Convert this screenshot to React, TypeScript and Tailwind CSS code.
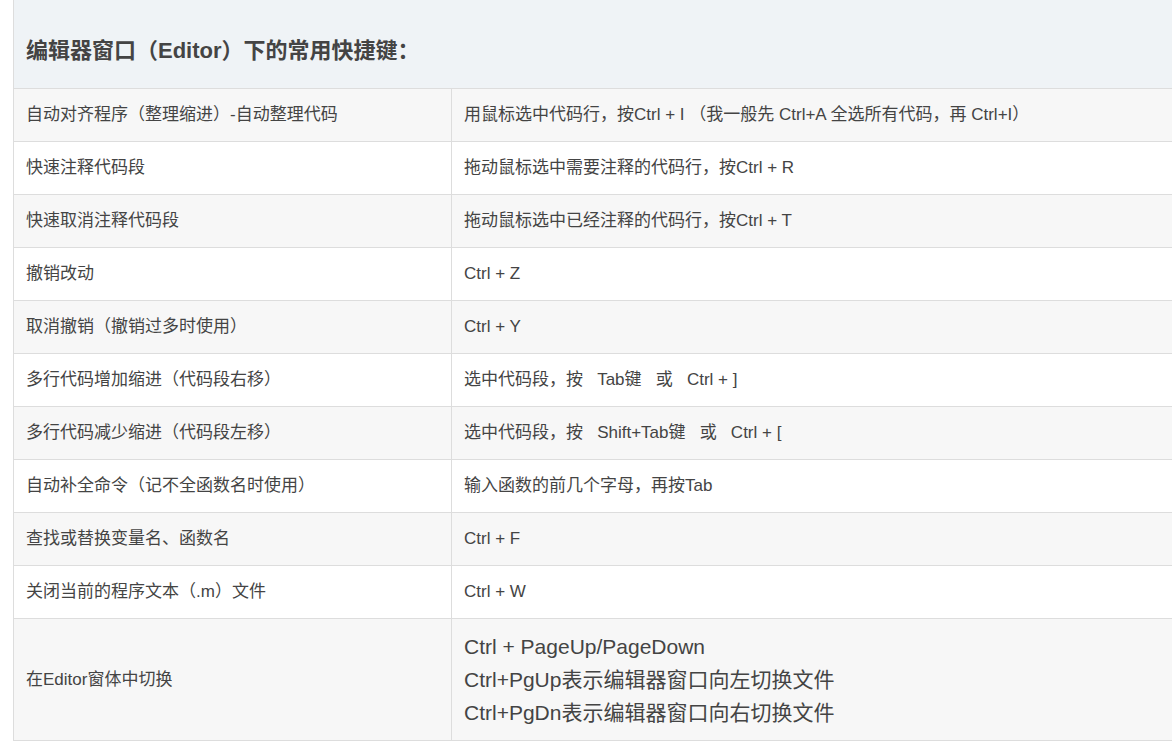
const rows: [string, string][] = [
  ['自动对齐程序（整理缩进）-自动整理代码', '用鼠标选中代码行，按Ctrl + I （我一般先 Ctrl+A 全选所有代码，再 Ctrl+I）'],
  ['快速注释代码段', '拖动鼠标选中需要注释的代码行，按Ctrl + R'],
  ['快速取消注释代码段', '拖动鼠标选中已经注释的代码行，按Ctrl + T'],
  ['撤销改动', 'Ctrl + Z'],
  ['取消撤销（撤销过多时使用）', 'Ctrl + Y'],
  ['多行代码增加缩进（代码段右移）', '选中代码段，按\u00a0\u00a0 Tab键\u00a0\u00a0 或\u00a0\u00a0 Ctrl + ]'],
  ['多行代码减少缩进（代码段左移）', '选中代码段，按\u00a0\u00a0 Shift+Tab键\u00a0\u00a0 或\u00a0\u00a0 Ctrl + ['],
  ['自动补全命令（记不全函数名时使用）', '输入函数的前几个字母，再按Tab'],
  ['查找或替换变量名、函数名', 'Ctrl + F'],
  ['关闭当前的程序文本（.m）文件', 'Ctrl + W'],
];

export default function App() {
  return (
    <div
      className="min-h-screen overflow-hidden bg-white pl-[13px] text-[#444]"
      style={{ fontFamily: '"Liberation Sans", "Noto Sans CJK SC", sans-serif' }}
    >
      <div className="w-[1180px] border-l border-[#ddd]">
        <div className="flex h-[89px] items-center border-b border-[#ddd] bg-[#eff3f6] pl-3 pt-3 text-[22px] font-bold text-[#444]">
          编辑器窗口（Editor）下的常用快捷键：
        </div>
        {rows.map(([a, b], i) => (
          <div key={i} className={`flex h-[53px] border-b border-[#ddd] text-[17px] ${i % 2 === 0 ? 'bg-[#f7f7f7]' : 'bg-white'}`}>
            <div className="flex w-[438px] items-center border-r border-[#ddd] pl-3">{a}</div>
            <div className="flex flex-1 items-center whitespace-pre pl-3">{b}</div>
          </div>
        ))}
        <div className="flex h-[122px] border-b border-[#ddd] bg-[#f7f7f7]">
          <div className="flex w-[438px] items-center border-r border-[#ddd] pl-3 text-[17px]">在Editor窗体中切换</div>
          <div className="flex flex-1 flex-col justify-center pl-3 text-[21px] leading-[33px]">
            <div>Ctrl + PageUp/PageDown</div>
            <div>Ctrl+PgUp表示编辑器窗口向左切换文件</div>
            <div>Ctrl+PgDn表示编辑器窗口向右切换文件</div>
          </div>
        </div>
      </div>
    </div>
  );
}
